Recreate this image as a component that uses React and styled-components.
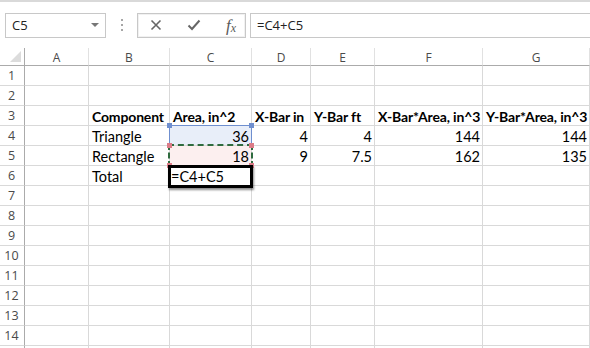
import React from "react";
import styled, { createGlobalStyle } from "styled-components";

const Global = createGlobalStyle`
  html, body { margin: 0; padding: 0; background: #fff; }
  body { width: 590px; height: 348px; overflow: hidden; }
  #root { width: 590px; height: 348px; overflow: hidden; }
`;

const Page = styled.div`
  width: 590px;
  height: 348px;
  overflow: hidden;
  display: flex;
  flex-direction: column;
  background: #fff;
  border-top: 2px solid #d9d9d9;
  box-sizing: border-box;
`;

const Toolbar = styled.div`
  flex-shrink: 0;
  display: flex;
  align-items: center;
  height: 46px;
  padding: 0 0 0 5px;
  box-sizing: border-box;
  font-family: "Open Sans", "Liberation Sans", sans-serif;
  color: #222;
`;

const NameBox = styled.div`
  width: 101px;
  height: 25px;
  box-sizing: border-box;
  border: 1px solid #c8c8c8;
  display: flex;
  align-items: center;
  justify-content: space-between;
  padding: 0 6px 0 6px;
  font-size: 13px;
`;

const Caret = styled.span`
  width: 0;
  height: 0;
  border-left: 4px solid transparent;
  border-right: 4px solid transparent;
  border-top: 4px solid #777;
`;

const Grip = styled.div`
  width: 31px;
  display: flex;
  flex-direction: column;
  align-items: center;
  gap: 3px;
  span {
    width: 2px;
    height: 2px;
    background: #a6a6a6;
    display: block;
  }
`;

const ButtonsBox = styled.div`
  width: 109px;
  height: 25px;
  box-sizing: border-box;
  border: 1px solid #c8c8c8;
  box-shadow: inset 0 0 0 1px #f1f1f1;
  display: flex;
  align-items: center;
  justify-content: space-between;
  padding: 0 9px 0 12px;
`;

const FxText = styled.span`
  display: inline-flex;
  align-items: baseline;
  font-family: "Liberation Serif", serif;
  font-style: italic;
  font-size: 17px;
  color: #5a5a5a;
  line-height: 1;
  small { font-size: 12px; margin-left: 0px; position: relative; top: 1px; }
`;

const FormulaInput = styled.div`
  flex: 1;
  height: 25px;
  margin-left: 4px;
  box-sizing: border-box;
  border: 1px solid #c8c8c8;
  border-right: none;
  display: flex;
  align-items: center;
  padding-left: 6px;
  font-size: 13px;
`;

const Sheet = styled.div`
  flex-shrink: 0;
  display: grid;
  grid-template-columns: 25px 64px 81px 82px 59px 64px 108px 107px;
  grid-template-rows: 18px;
  grid-auto-rows: 20px;
`;

const Corner = styled.div`
  position: relative;
  box-sizing: border-box;
  border-right: 1px solid #ababab;
  border-bottom: 1px solid #ababab;
  &::after {
    content: "";
    position: absolute;
    right: 3px;
    bottom: 3px;
    width: 0;
    height: 0;
    border-left: 11px solid transparent;
    border-bottom: 11px solid #dcdcdc;
  }
`;

const ColHead = styled.div`
  box-sizing: border-box;
  border-right: 1px solid #e1e1e1;
  border-bottom: 1px solid #ababab;
  display: flex;
  align-items: center;
  justify-content: center;
  font-family: "Open Sans", "Liberation Sans", sans-serif;
  font-size: 12px;
  color: #4a4a4a;
  padding-top: 1px;
`;

const RowHead = styled.div`
  box-sizing: border-box;
  border-right: 1px solid #ababab;
  border-bottom: 1px solid #d9d9d9;
  display: flex;
  align-items: center;
  justify-content: center;
  font-family: "Open Sans", "Liberation Sans", sans-serif;
  font-size: 12.5px;
  color: #4a4a4a;
  padding-right: 1px;
`;

const Cell = styled.div`
  position: relative;
  box-sizing: border-box;
  border-right: 1px solid #d9d9d9;
  border-bottom: 1px solid #d9d9d9;
  background: ${(p) => p.$fill || "transparent"};
  display: flex;
  align-items: center;
  justify-content: ${(p) => (p.$num ? "flex-end" : "flex-start")};
  padding: 1px 2px 0 3px;
  font-family: "Lato", "Liberation Sans", sans-serif;
  font-size: ${(p) => (p.$bold ? "14px" : "14.5px")};
  letter-spacing: ${(p) => (p.$bold ? "-0.15px" : "0")};
  font-weight: ${(p) => (p.$bold ? 700 : 400)};
  color: #000;
  white-space: nowrap;
  overflow: visible;
  z-index: ${(p) => (p.$z ? p.$z : "auto")};
`;

const RefBox = styled.div`
  position: absolute;
  left: -1px;
  top: -1px;
  right: -1px;
  bottom: -1px;
  pointer-events: none;
  border-left: 1px solid ${(p) => p.$color};
  border-right: 1px solid ${(p) => p.$color};
  border-top: ${(p) => (p.$top ? `1px solid ${p.$color}` : "none")};
`;

const Handle = styled.span`
  position: absolute;
  width: 5px;
  height: 5px;
  background: ${(p) => p.$color};
  ${(p) => (p.$left ? "left: -3px;" : "right: -3px;")}
  ${(p) => (p.$top ? "top: -3px;" : "bottom: -3px;")}
  z-index: 3;
`;

const Ants = styled.div`
  position: absolute;
  left: -2px;
  right: -2px;
  top: -2px;
  bottom: -2px;
  pointer-events: none;
  border: 2px dashed #2f6b3f;
  z-index: 2;
`;

const ActiveBox = styled.div`
  position: absolute;
  left: -2px;
  top: -1px;
  right: -2px;
  bottom: -3px;
  border: 3px solid #000;
  box-shadow: 1px 2px 2px rgba(0, 0, 0, 0.45);
  background: #fff;
  display: flex;
  align-items: center;
  box-sizing: border-box;
  z-index: 4;
`;

const cols = ["A", "B", "C", "D", "E", "F", "G"];

const data = {
  3: { B: ["Component", 0, 1], C: ["Area, in^2", 0, 1], D: ["X-Bar in", 0, 1], E: ["Y-Bar ft", 0, 1], F: ["X-Bar*Area, in^3", 0, 1], G: ["Y-Bar*Area, in^3", 0, 1] },
  4: { B: ["Triangle"], C: ["36", 1], D: ["4", 1], E: ["4", 1], F: ["144", 1], G: ["144", 1] },
  5: { B: ["Rectangle"], C: ["18", 1], D: ["9", 1], E: ["7.5", 1], F: ["162", 1], G: ["135", 1] },
  6: { B: ["Total"] },
};

function renderCell(r, c) {
  const d = (data[r] && data[r][c]) || null;
  const key = `${c}${r}`;
  const text = d ? d[0] : "";
  const num = d ? !!d[1] : false;
  const bold = d ? !!d[2] : false;
  if (key === "C4") {
    return (
      <Cell key={key} $num $fill="#e8eef9" $z={2}>
        {text}
        <RefBox $color="#6f8fcf" $top />
        <Handle $color="#6f8fcf" $left $top />
        <Handle $color="#6f8fcf" $top />
      </Cell>
    );
  }
  if (key === "C5") {
    return (
      <Cell key={key} $num $fill="#fcefef" $z={3}>
        {text}
        <Ants />
        <Handle $color="#dc7c88" $left $top />
        <Handle $color="#dc7c88" $top />
        <Handle $color="#dc7c88" $left />
        <Handle $color="#dc7c88" />
      </Cell>
    );
  }
  if (key === "C6") {
    return (
      <Cell key={key} $z={4}>
        <ActiveBox>=C4+C5</ActiveBox>
      </Cell>
    );
  }
  return (
    <Cell key={key} $num={num} $bold={bold}>
      {text}
    </Cell>
  );
}

export default function App() {
  const rows = Array.from({ length: 15 }, (_, i) => i + 1);
  return (
    <>
      <Global />
      <Page>
        <Toolbar>
          <NameBox>
            <span>C5</span>
            <Caret />
          </NameBox>
          <Grip>
            <span />
            <span />
            <span />
          </Grip>
          <ButtonsBox>
            <svg width="12" height="12" viewBox="0 0 12 12">
              <path d="M1.5 1.5 L10.5 10.5 M10.5 1.5 L1.5 10.5" stroke="#666" strokeWidth="1.6" fill="none" />
            </svg>
            <svg width="14" height="12" viewBox="0 0 14 12">
              <path d="M1.5 6.5 L5 10 L12.5 1.5" stroke="#666" strokeWidth="2" fill="none" />
            </svg>
            <FxText>
              f<small>x</small>
            </FxText>
          </ButtonsBox>
          <FormulaInput>=C4+C5</FormulaInput>
        </Toolbar>
        <Sheet>
          <Corner />
          {cols.map((c) => (
            <ColHead key={"h" + c}>{c}</ColHead>
          ))}
          {rows.map((r) => (
            <React.Fragment key={r}>
              <RowHead>{r}</RowHead>
              {cols.map((c) => renderCell(r, c))}
            </React.Fragment>
          ))}
        </Sheet>
      </Page>
    </>
  );
}
